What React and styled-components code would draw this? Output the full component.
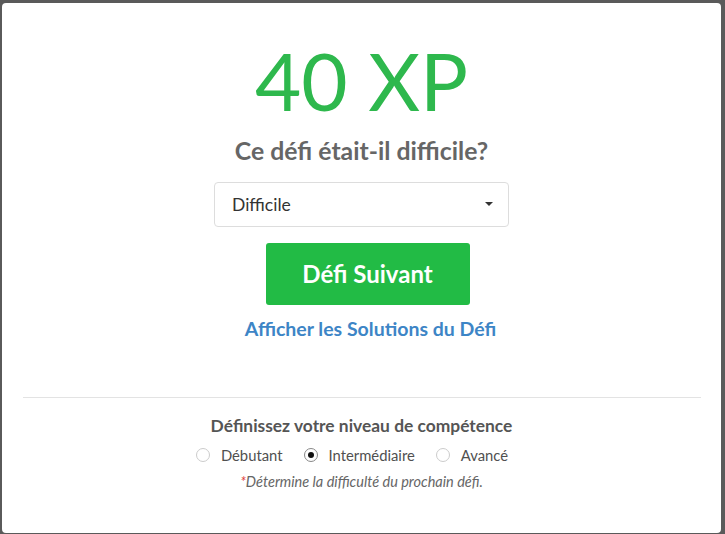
import React, { useState } from "react";
import styled, { createGlobalStyle } from "styled-components";

const Global = createGlobalStyle`
  html, body { margin: 0; padding: 0; }
  body {
    background: #5a5a5a;
    font-family: Lato, "Noto Sans", sans-serif;
    width: 725px;
    height: 534px;
    overflow: hidden;
  }
`;

const Modal = styled.div`
  box-sizing: border-box;
  margin: 3px 4px 0 2px;
  height: 530px;
  background: #fff;
  border-radius: 4px;
  display: flex;
  flex-direction: column;
  align-items: center;
  padding: 0 20px;
`;

const Top = styled.div`
  display: flex;
  flex-direction: column;
  align-items: center;
  padding-top: 37px;
  width: 100%;
`;

const Xp = styled.div`
  color: #2eb84d;
  font-size: 80px;
  font-weight: 400;
  line-height: 1;
`;

const Question = styled.h2`
  margin: 16px 0 0;
  font-size: 24.8px;
  font-weight: 700;
  color: #666;
  line-height: 1.2;
`;

const SelectBox = styled.div`
  box-sizing: border-box;
  margin-top: 16px;
  width: 295px;
  height: 45px;
  border: 1px solid #ddd;
  border-radius: 4px;
  display: flex;
  align-items: center;
  justify-content: space-between;
  padding: 0 15px 0 17px;
  font-size: 17.5px;
  color: #333;
`;

const Caret = styled.span`
  width: 0;
  height: 0;
  border-left: 4px solid transparent;
  border-right: 4px solid transparent;
  border-top: 4px solid #333;
`;

const NextButton = styled.button`
  margin: 16px 0 0 12px;
  width: 204px;
  height: 62px;
  border: none;
  border-radius: 3px;
  background: #22bb45;
  color: #fff;
  font-family: Lato, sans-serif;
  font-weight: 700;
  font-size: 24px;
`;

const SolutionsLink = styled.a`
  margin: 12px 0 0 18px;
  color: #3d85c6;
  font-weight: 700;
  font-size: 19.5px;
  text-decoration: none;
`;

const Divider = styled.hr`
  box-sizing: border-box;
  width: 678px;
  margin: 57px 0 0;
  border: none;
  border-top: 1px solid #e3e3e3;
`;

const SkillTitle = styled.div`
  margin-top: 17px;
  font-size: 17.4px;
  font-weight: 700;
  color: #555;
`;

const RadioRow = styled.div`
  display: flex;
  align-items: center;
  gap: 21px;
  margin-top: 10px;
  padding-right: 19px;
`;

const RadioLabel = styled.label`
  display: flex;
  align-items: center;
  gap: 11px;
  font-size: 14.8px;
  color: #505050;
`;

const Circle = styled.span`
  box-sizing: border-box;
  width: 14px;
  height: 14px;
  border-radius: 50%;
  border: 1px solid ${(p) => (p.$checked ? "#888" : "#ccc")};
  display: flex;
  align-items: center;
  justify-content: center;
  &::after {
    content: "";
    width: 6px;
    height: 6px;
    border-radius: 50%;
    background: ${(p) => (p.$checked ? "#111" : "transparent")};
  }
`;

const Note = styled.div`
  margin-top: 9px;
  font-size: 14.5px;
  font-style: italic;
  color: #666;
`;

const Star = styled.span`
  color: #e04040;
`;

const levels = ["Débutant", "Intermédiaire", "Avancé"];

export default function App() {
  const [level] = useState("Intermédiaire");
  return (
    <>
      <Global />
      <Modal>
        <Top>
          <Xp>40 XP</Xp>
          <Question>Ce défi était-il difficile?</Question>
          <SelectBox>
            <span>Difficile</span>
            <Caret />
          </SelectBox>
          <NextButton>Défi Suivant</NextButton>
          <SolutionsLink href="#">Afficher les Solutions du Défi</SolutionsLink>
        </Top>
        <Divider />
        <SkillTitle>Définissez votre niveau de compétence</SkillTitle>
        <RadioRow>
          {levels.map((l) => (
            <RadioLabel key={l}>
              <Circle $checked={l === level} />
              {l}
            </RadioLabel>
          ))}
        </RadioRow>
        <Note>
          <Star>*</Star>Détermine la difficulté du prochain défi.
        </Note>
      </Modal>
    </>
  );
}
